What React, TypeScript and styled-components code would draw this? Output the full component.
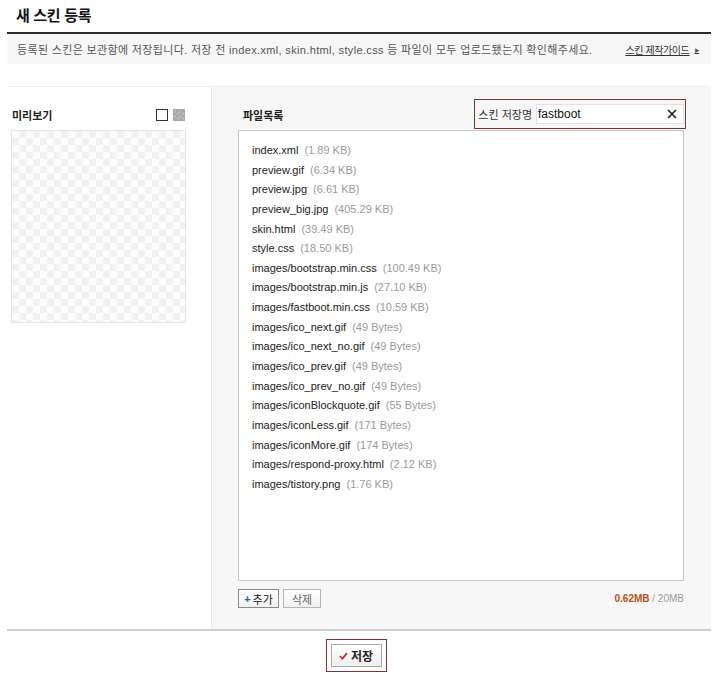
import React from "react";
import styled, { createGlobalStyle } from "styled-components";

const Global = createGlobalStyle`
  html, body { margin: 0; padding: 0; background: #fff; }
  body { font-family: "Liberation Sans", "Noto Sans CJK KR", sans-serif; color: #333; }
  * { box-sizing: border-box; }
`;

const Page = styled.div`
  width: 704px;
  margin-left: 7px;
`;

const Title = styled.h2`
  margin: 0;
  height: 32px;
  padding-left: 9px;
  font-size: 15px;
  line-height: 31px;
  font-weight: bold;
  color: #111;
  letter-spacing: -0.3px;
`;

const Notice = styled.div`
  border-top: 2px solid #2b2b2b;
  background: #f7f7f7;
  height: 32px;
  display: flex;
  align-items: center;
  justify-content: space-between;
  padding: 0 12px 0 10px;
  font-size: 11px;
  color: #555;
`;

const NoticeText = styled.span`
  letter-spacing: 0.34px;
`;

const GuideLink = styled.a`
  color: #333;
  font-size: 10px;
  letter-spacing: -0.4px;
  text-decoration: underline;
  display: flex;
  align-items: center;
  gap: 5px;
  span { text-decoration: none; font-size: 5px; color: #555; }
`;

const Main = styled.div`
  margin-top: 22px;
  display: flex;
  height: 545px;
  border-top: 1px solid #efefef;
  border-bottom: 2px solid #cfcfcf;
`;

const LeftCol = styled.div`
  width: 204px;
  padding: 0 4px;
  background: #fff;
`;

const ColHeader = styled.div`
  height: 43px;
  display: flex;
  align-items: center;
  justify-content: space-between;
  padding-top: 12px;
`;

const ColTitle = styled.h3<{ $indent?: number }>`
  margin: 0;
  padding-left: ${(p) => p.$indent ?? 0}px;
  font-size: 11px;
  font-weight: bold;
  color: #222;
`;

const Swatches = styled.div`
  display: flex;
  gap: 5px;
  margin-right: 22px;
`;

const Swatch = styled.span<{ $dark?: boolean }>`
  width: 12px;
  height: 12px;
  display: block;
  border: 1px solid ${(p) => (p.$dark ? "#a8a8a8" : "#333")};
  background: ${(p) =>
    p.$dark
      ? "repeating-conic-gradient(#a9a9a9 0 25%, #b8b8b8 0 50%) 0 0/5px 5px"
      : "#fff"};
`;

const Preview = styled.div`
  width: 175px;
  height: 193px;
  border: 1px solid #e6e6e6;
  background: repeating-conic-gradient(#f1f1f1 0 25%, #fdfdfd 0 50%) 0 0/14px 14px;
`;

const RightCol = styled.div`
  flex: 1;
  background: #f7f7f7;
  border-left: 1px solid #e8e8e8;
  padding: 0 27px 0 26px;
  display: flex;
  flex-direction: column;
`;

const NameBox = styled.div`
  display: flex;
  align-items: center;
  gap: 4px;
  height: 30px;
  margin-right: -2px;
  margin-top: -2px;
  padding: 0 1px 0 3px;
  border: 1px solid #7a3434;
  background: #f7f7f7;
  font-size: 11px;
  color: #333;
`;

const NameInput = styled.div`
  width: 148px;
  height: 20px;
  background: #fff;
  border: 1px solid #e2e2e2;
  display: flex;
  align-items: center;
  justify-content: space-between;
  padding: 0 6px 0 1px;
  font-size: 12px;
  color: #111;
`;

const FileList = styled.ul`
  list-style: none;
  margin: 0;
  height: 451px;
  background: #fff;
  border: 1px solid #c8c8c8;
  padding: 10px 0 0 13px;
`;

const FileItem = styled.li`
  height: 19.65px;
  line-height: 19.65px;
  font-size: 11px;
  color: #222;
  white-space: nowrap;
`;

const FileSize = styled.span`
  color: #9a9a9a;
  margin-left: 6px;
`;

const ListFooter = styled.div`
  display: flex;
  align-items: center;
  justify-content: space-between;
  margin-top: 7px;
  height: 21px;
`;

const BtnGroup = styled.div`
  display: flex;
  gap: 4px;
`;

const SmallBtn = styled.button<{ $primary?: boolean }>`
  height: 19px;
  width: ${(p) => (p.$primary ? 41 : 38)}px;
  padding: 0;
  border: 1px solid ${(p) => (p.$primary ? "#8a8a8a" : "#b5b5b5")};
  background: linear-gradient(#ffffff, #f0f0f0);
  font-family: inherit;
  font-size: 11px;
  color: ${(p) => (p.$primary ? "#222" : "#666")};
  display: flex;
  align-items: center;
  justify-content: center;
  gap: 2px;
  b { color: #2f5f9a; font-size: 11px; }
`;

const Usage = styled.div`
  font-size: 10px;
  color: #9a9a9a;
  strong { color: #b5521f; }
`;

const SaveRow = styled.div`
  display: flex;
  justify-content: center;
  padding: 8px 6px 0 0;
`;

const SaveFrame = styled.div`
  border: 1px solid #7a3434;
  padding: 4px;
`;

const SaveBtn = styled.button`
  width: 51px;
  height: 23px;
  border: 1px solid #a8a8a8;
  background: linear-gradient(#ffffff, #efefef);
  font-family: inherit;
  font-size: 12px;
  font-weight: bold;
  color: #222;
  display: flex;
  align-items: center;
  justify-content: center;
  gap: 3px;
  padding: 0;
`;

const files: [string, string][] = [
  ["index.xml", "1.89 KB"],
  ["preview.gif", "6.34 KB"],
  ["preview.jpg", "6.61 KB"],
  ["preview_big.jpg", "405.29 KB"],
  ["skin.html", "39.49 KB"],
  ["style.css", "18.50 KB"],
  ["images/bootstrap.min.css", "100.49 KB"],
  ["images/bootstrap.min.js", "27.10 KB"],
  ["images/fastboot.min.css", "10.59 KB"],
  ["images/ico_next.gif", "49 Bytes"],
  ["images/ico_next_no.gif", "49 Bytes"],
  ["images/ico_prev.gif", "49 Bytes"],
  ["images/ico_prev_no.gif", "49 Bytes"],
  ["images/iconBlockquote.gif", "55 Bytes"],
  ["images/iconLess.gif", "171 Bytes"],
  ["images/iconMore.gif", "174 Bytes"],
  ["images/respond-proxy.html", "2.12 KB"],
  ["images/tistory.png", "1.76 KB"],
];

export default function App() {
  return (
    <>
      <Global />
      <Page>
        <Title>새 스킨 등록</Title>
        <Notice>
          <NoticeText>
            등록된 스킨은 보관함에 저장됩니다. 저장 전 index.xml, skin.html, style.css 등 파일이 모두 업로드됐는지 확인해주세요.
          </NoticeText>
          <GuideLink href="#">
            스킨 제작가이드 <span>▶</span>
          </GuideLink>
        </Notice>
        <Main>
          <LeftCol>
            <ColHeader>
              <ColTitle $indent={1}>미리보기</ColTitle>
              <Swatches>
                <Swatch />
                <Swatch $dark />
              </Swatches>
            </ColHeader>
            <Preview />
          </LeftCol>
          <RightCol>
            <ColHeader>
              <ColTitle $indent={5}>파일목록</ColTitle>
              <NameBox>
                스킨 저장명
                <NameInput>
                  fastboot
                  <svg width="10" height="10" viewBox="0 0 10 10">
                    <path d="M1 1L9 9M9 1L1 9" stroke="#1a1a1a" strokeWidth="1.6" />
                  </svg>
                </NameInput>
              </NameBox>
            </ColHeader>
            <FileList>
              {files.map(([name, size]) => (
                <FileItem key={name}>
                  {name}
                  <FileSize>({size})</FileSize>
                </FileItem>
              ))}
            </FileList>
            <ListFooter>
              <BtnGroup>
                <SmallBtn $primary>
                  <b>+</b>추가
                </SmallBtn>
                <SmallBtn>삭제</SmallBtn>
              </BtnGroup>
              <Usage>
                <strong>0.62MB</strong> / 20MB
              </Usage>
            </ListFooter>
          </RightCol>
        </Main>
        <SaveRow>
          <SaveFrame>
            <SaveBtn>
              <svg width="9" height="8" viewBox="0 0 9 8">
                <path d="M1 4.2L3.4 6.6L8 1.2" stroke="#c0392b" strokeWidth="1.8" fill="none" />
              </svg>
              저장
            </SaveBtn>
          </SaveFrame>
        </SaveRow>
      </Page>
    </>
  );
}
